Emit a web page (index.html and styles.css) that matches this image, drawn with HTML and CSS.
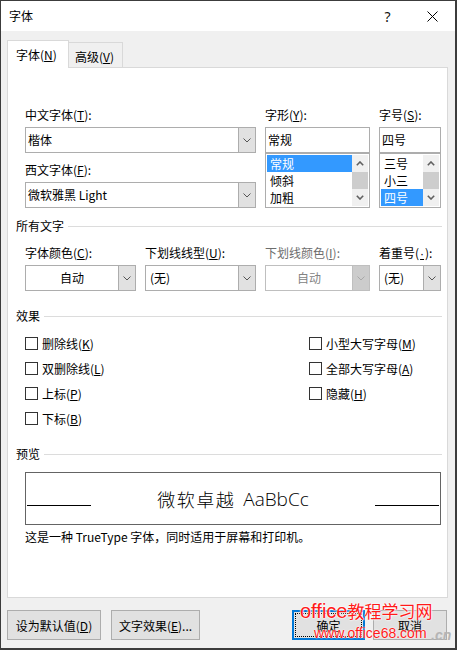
FILE: index.html
```html
<!DOCTYPE html>
<html lang="zh-CN">
<head>
<meta charset="utf-8">
<title>字体</title>
<link rel="stylesheet" href="styles.css">
</head>
<body>
<div class="window">
  <div class="titlebar">
    <span class="title">字体</span>
    <span class="tbtn help">?</span>
    <span class="tbtn close"><svg width="11" height="11" viewBox="0 0 11 11"><path d="M0.5 0.5 L10.5 10.5 M10.5 0.5 L0.5 10.5" stroke="#000" stroke-width="1"/></svg></span>
  </div>
  <div class="body">
    <div class="tabs">
      <div class="tab active">字体(<u>N</u>)</div>
      <div class="tab">高级(<u>V</u>)</div>
    </div>
    <div class="panel">
      <div class="grid top">
        <div class="cell span2">
          <div class="flabel">中文字体(<u>T</u>):</div>
          <div class="combo"><span class="val">楷体</span><span class="dd"><svg width="8" height="5" viewBox="0 0 8 5"><path d="M0.5 0.5 L4 4 L7.5 0.5" fill="none" stroke="#555"/></svg></span></div>
          <div class="flabel second">西文字体(<u>F</u>):</div>
          <div class="combo"><span class="val">微软雅黑 Light</span><span class="dd"><svg width="8" height="5" viewBox="0 0 8 5"><path d="M0.5 0.5 L4 4 L7.5 0.5" fill="none" stroke="#555"/></svg></span></div>
        </div>
        <div class="cell">
          <div class="flabel">字形(<u>Y</u>):</div>
          <div class="textbox">常规</div>
          <div class="list">
            <div class="items">
              <div class="item sel">常规</div>
              <div class="item">倾斜</div>
              <div class="item">加粗</div>
            </div>
            <div class="sbar">
              <div class="arrow"><svg width="8" height="5" viewBox="0 0 8 5"><path d="M0.8 4.2 L4 1 L7.2 4.2" fill="none" stroke="#606060" stroke-width="1.6"/></svg></div>
              <div class="thumb"></div>
              <div class="arrow"><svg width="8" height="5" viewBox="0 0 8 5"><path d="M0.8 0.8 L4 4 L7.2 0.8" fill="none" stroke="#606060" stroke-width="1.6"/></svg></div>
            </div>
          </div>
        </div>
        <div class="cell">
          <div class="flabel">字号(<u>S</u>):</div>
          <div class="textbox">四号</div>
          <div class="list">
            <div class="items">
              <div class="item">三号</div>
              <div class="item">小三</div>
              <div class="item sel">四号</div>
            </div>
            <div class="sbar">
              <div class="arrow"><svg width="8" height="5" viewBox="0 0 8 5"><path d="M0.8 4.2 L4 1 L7.2 4.2" fill="none" stroke="#606060" stroke-width="1.6"/></svg></div>
              <div class="thumb"></div>
              <div class="arrow"><svg width="8" height="5" viewBox="0 0 8 5"><path d="M0.8 0.8 L4 4 L7.2 0.8" fill="none" stroke="#606060" stroke-width="1.6"/></svg></div>
            </div>
          </div>
        </div>
      </div>

      <div class="section s-all"><span>所有文字</span></div>
      <div class="grid row2">
        <div class="cell">
          <div class="flabel">字体颜色(<u>C</u>):</div>
          <div class="combo"><span class="val center">自动</span><span class="dd"><svg width="8" height="5" viewBox="0 0 8 5"><path d="M0.5 0.5 L4 4 L7.5 0.5" fill="none" stroke="#555"/></svg></span></div>
        </div>
        <div class="cell">
          <div class="flabel">下划线线型(<u>U</u>):</div>
          <div class="combo"><span class="val pad">(无)</span><span class="dd"><svg width="8" height="5" viewBox="0 0 8 5"><path d="M0.5 0.5 L4 4 L7.5 0.5" fill="none" stroke="#555"/></svg></span></div>
        </div>
        <div class="cell">
          <div class="flabel disabled">下划线颜色(<u>I</u>):</div>
          <div class="combo off"><span class="val center">自动</span><span class="dd"><svg width="8" height="5" viewBox="0 0 8 5"><path d="M0.5 0.5 L4 4 L7.5 0.5" fill="none" stroke="#a8a8a8"/></svg></span></div>
        </div>
        <div class="cell">
          <div class="flabel">着重号(<u class="dot">·</u>):</div>
          <div class="combo"><span class="val pad">(无)</span><span class="dd"><svg width="8" height="5" viewBox="0 0 8 5"><path d="M0.5 0.5 L4 4 L7.5 0.5" fill="none" stroke="#555"/></svg></span></div>
        </div>
      </div>

      <div class="section s-fx"><span>效果</span></div>
      <div class="checks">
        <div class="ccol left">
          <div class="chk"><span class="box"></span>删除线(<u>K</u>)</div>
          <div class="chk"><span class="box"></span>双删除线(<u>L</u>)</div>
          <div class="chk"><span class="box"></span>上标(<u>P</u>)</div>
          <div class="chk"><span class="box"></span>下标(<u>B</u>)</div>
        </div>
        <div class="ccol">
          <div class="chk"><span class="box"></span>小型大写字母(<u>M</u>)</div>
          <div class="chk"><span class="box"></span>全部大写字母(<u>A</u>)</div>
          <div class="chk"><span class="box"></span>隐藏(<u>H</u>)</div>
        </div>
      </div>

      <div class="section s-pv"><span>预览</span></div>
      <div class="preview">
        <div class="pline"></div>
        <div class="ptext"><span class="zh">微软卓越</span><span class="en">AaBbCc</span></div>
        <div class="pline"></div>
      </div>
      <div class="desc">这是一种 TrueType 字体，同时适用于屏幕和打印机。</div>
    </div>

    <div class="buttons">
      <div class="btn b1">设为默认值(<u>D</u>)</div>
      <div class="btn b2">文字效果(<u>E</u>)...</div>
      <div class="spacer"></div>
      <div class="btn ok">确定</div>
      <div class="btn cancel">取消</div>
    </div>
  </div>

  <div class="watermark">
    <div class="wm1"><span class="lat">office</span>教程学习网</div>
    <div class="wm2">www.office68.com</div>
    <div class="wm3">.cn</div>
  </div>
</div>
</body>
</html>
```

FILE: styles.css
```css
* { box-sizing: border-box; }
html, body { margin: 0; padding: 0; }
body {
  width: 457px;
  height: 650px;
  overflow: hidden;
  font-family: "Noto Sans CJK SC", sans-serif;
  font-size: 12px;
  color: #000;
}
u { text-decoration: underline; text-underline-offset: 1px; text-decoration-thickness: 1px; }
u.dot { font-family: "Liberation Sans", sans-serif; padding: 0 1px; }

.window {
  position: relative;
  width: 457px;
  height: 650px;
  border-style: solid;
  border-color: #3c3c3c;
  border-width: 1px 2px 2px 1px;
  background: #f0f0f0;
  display: flex;
  flex-direction: column;
}

/* title bar */
.titlebar {
  height: 30px;
  flex: none;
  background: #fff;
  display: flex;
  align-items: center;
  padding-left: 8px;
}
.title { flex: 1; line-height: 16px; }
.tbtn {
  width: 45px;
  height: 30px;
  display: flex;
  align-items: center;
  justify-content: center;
}
.help { font-family: "Noto Sans", sans-serif; font-size: 14px; color: #111; }

/* body */
.body {
  flex: 1;
  display: flex;
  flex-direction: column;
  padding: 9px 7px 8px 6px;
}

.tabs {
  display: flex;
  align-items: flex-end;
  height: 28px;
  margin-bottom: -1px;
  position: relative;
  z-index: 1;
}
.tab {
  height: 26px;
  width: 54px;
  border-top: 1px solid #d9d9d9;
  border-right: 1px solid #d9d9d9;
  border-bottom: 1px solid #d9d9d9;
  padding: 6px 0 0 6px;
  line-height: 16px;
  white-space: nowrap;
}
.tab.active {
  height: 28px;
  width: 62px;
  background: #fff;
  border-left: 1px solid #d9d9d9;
  border-bottom: none;
  padding: 6px 0 0 8px;
}

.panel {
  height: 531px;
  flex: none;
  background: #fff;
  border: 1px solid #d9d9d9;
  padding: 39px 5px 0 8px;
}

.grid {
  display: grid;
  grid-template-columns: 111px 111px 105px 62px;
  column-gap: 9px;
  margin-left: 9px;
}
.span2 { grid-column: span 2; }
.cell { display: flex; flex-direction: column; }

.flabel {
  height: 16px;
  line-height: 16px;
  margin-bottom: 4px;
  white-space: nowrap;
}
.flabel.second { margin-top: 9px; }
.flabel.disabled { color: #6d6d6d; }

.combo {
  height: 26px;
  border: 1px solid #adadad;
  background: #fff;
  display: flex;
}
.combo .val {
  flex: 1;
  padding-left: 2px;
  line-height: 24px;
  white-space: nowrap;
}
.combo .val.pad { padding-left: 4px; }
.combo .val.center { text-align: center; padding-left: 0; }
.combo .dd {
  width: 17px;
  flex: none;
  border-left: 1px solid #adadad;
  background: #e1e1e1;
  display: flex;
  align-items: center;
  justify-content: center;
}
.combo.off { border-color: #bfbfbf; }
.combo.off .val { color: #838383; }
.combo.off .dd { background: #cccccc; border-left-color: #bfbfbf; }

.textbox {
  height: 26px;
  border: 1px solid #adadad;
  padding-left: 2px;
  line-height: 24px;
}
.list {
  height: 55px;
  border: 1px solid #adadad;
  padding: 1px;
  display: flex;
}
.items { flex: 1; }
.item {
  height: 17px;
  line-height: 17px;
  padding-left: 3px;
}
.item.sel { background: #3399ff; color: #fff; }
.sbar {
  width: 16px;
  flex: none;
  background: #f0f0f0;
  display: flex;
  flex-direction: column;
}
.sbar .arrow {
  height: 17px;
  display: flex;
  align-items: center;
  justify-content: center;
}
.sbar .thumb { height: 17px; background: #cdcdcd; }

/* section headers */
.section {
  display: flex;
  align-items: center;
  height: 16px;
  line-height: 16px;
}
.section::after {
  content: "";
  flex: 1;
  height: 1px;
  background: #dcdcdc;
  margin-left: 4px;
}
.s-all { margin-top: 10px; }
.row2 { margin-top: 11px; }
.s-fx { margin-top: 17px; }
.s-pv { margin-top: 15px; }

/* checkboxes */
.checks {
  display: flex;
  margin-left: 9px;
  margin-top: 7px;
}
.ccol.left { width: 284px; }
.chk {
  height: 25px;
  display: flex;
  align-items: center;
  white-space: nowrap;
}
.chk .box {
  width: 13px;
  height: 13px;
  border: 1px solid #333;
  background: #fff;
  margin-right: 4px;
  flex: none;
}

/* preview */
.preview {
  margin: 10px 0 0 9px;
  width: 416px;
  height: 53px;
  border: 1px solid #646464;
  display: flex;
  padding: 0 1px;
}
.pline {
  width: 64px;
  height: 1px;
  background: #000;
  margin-top: 32px;
  flex: none;
}
.ptext {
  flex: 1;
  display: flex;
  align-items: center;
  justify-content: center;
  white-space: nowrap;
  padding-top: 1px;
}
.ptext .zh {
  font-size: 18px;
  font-weight: 300;
  letter-spacing: 1.5px;
  margin-right: 8px;
}
.ptext .en {
  font-family: "Open Sans", sans-serif;
  font-weight: 300;
  font-size: 19px;
}
.desc {
  margin: 4px 0 0 9px;
  line-height: 16px;
  white-space: nowrap;
}

/* bottom buttons */
.buttons {
  display: flex;
  margin-top: 12px;
  height: 30px;
}
.btn {
  height: 30px;
  border: 1px solid #adadad;
  background: #e1e1e1;
  display: flex;
  align-items: center;
  justify-content: center;
  white-space: nowrap;
}
.b1 { width: 94px; }
.b2 { width: 89px; margin-left: 10px; }
.spacer { flex: 1; }
.ok {
  width: 73px;
  border: 2px solid #0078d7;
  outline: 1px dotted #000;
  outline-offset: -4px;
}
.cancel { width: 74px; margin-left: 8px; margin-right: 1px; }

/* watermark overlay */
.watermark {
  position: absolute;
  left: 299px;
  top: 597px;
  width: 156px;
  height: 50px;
  color: #ff1a1a;
  pointer-events: none;
}
.wm1 {
  font-family: "Noto Sans CJK SC", sans-serif;
  font-size: 17px;
  line-height: 26px;
  white-space: nowrap;
  text-shadow: 0 0 2px #fff, 0 0 2px #fff, 0 0 1px #fff;
}
.wm1 .lat {
  font-family: "Liberation Sans", sans-serif;
  font-size: 20px;
}
.wm2 {
  position: absolute;
  left: 14px;
  top: 27px;
  font-family: "Liberation Sans", sans-serif;
  font-size: 14px;
  line-height: 16px;
  white-space: nowrap;
  text-shadow: 0 0 2px #fff, 0 0 1px #fff;
}
.wm3 {
  position: absolute;
  left: 131px;
  top: 29px;
  font-family: "Liberation Sans", sans-serif;
  font-style: italic;
  font-weight: bold;
  font-size: 14px;
  line-height: 16px;
  color: #b5b5b5;
}
```
